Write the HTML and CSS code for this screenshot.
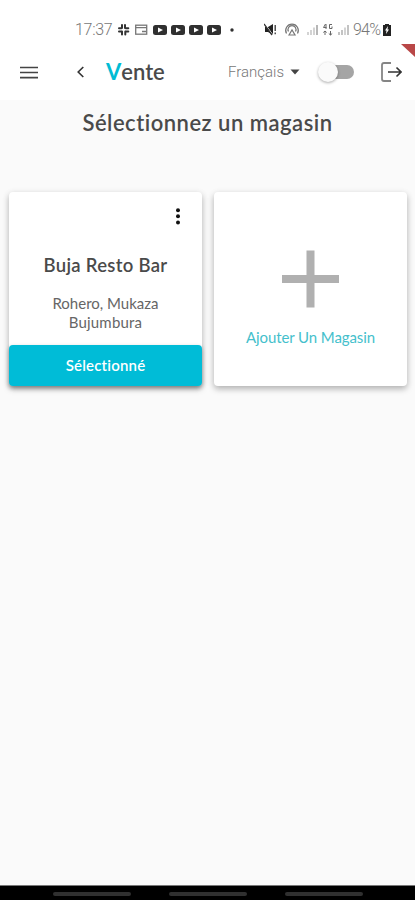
FILE: index.html
```html
<!DOCTYPE html>
<html lang="fr">
<head>
<meta charset="utf-8">
<title>Vente</title>
<link rel="stylesheet" href="styles.css">
</head>
<body>
<div class="status">
  <span class="time">17:37</span>
  <svg class="status-left" width="122" height="14" viewBox="0 0 122 14">
    <g stroke="#333" stroke-width="2" stroke-linecap="round"><path d="M5 2v3M2 5.300h2.500M8 2v3M8.800 5.200h2.500M5 8.600v3M2 8.400h2.500M8.300 8.600v3M8.800 8.400h2.500"/></g>
    <g fill="none" stroke="#777" stroke-width="1.300"><rect x="18.700" y="2.200" width="11" height="9"/><path d="M19 4.700h11M25 8.500h4"/></g>
    <g fill="#303030"><rect x="36" y="2" width="14" height="10" rx="2.500"/><rect x="54" y="2" width="14" height="10" rx="2.500"/><rect x="72" y="2" width="14" height="10" rx="2.500"/><rect x="90" y="2" width="14" height="10" rx="2.500"/><circle cx="115" cy="7" r="1.700"/></g>
    <path fill="#fff" d="M41 4.500l5 2.500-5 2.500zM59 4.500l5 2.500-5 2.500zM77 4.500l5 2.500-5 2.500zM95 4.500l5 2.500-5 2.500z"/>
  </svg>
  <svg class="status-right" width="88" height="14" viewBox="0 0 88 14">
    <path fill="#222" d="M1 4h3l5-3v11L4 9H1z"/><path d="M1 1l8 11" stroke="#fff" stroke-width="1"/><path d="M0 1l8 11M11.200 2v6M11.200 9.500v1.800" stroke="#333" stroke-width="1.300"/>
    <g fill="none" stroke="#777" stroke-width="1.200"><path d="M22.500 10.500a6.300 6.300 0 1 1 11 0M24.500 8.500a4 4 0 1 1 7 0"/><path d="M25 12l3-5 3 5z"/></g>
    <path d="M44 9v3M47 7v5M50 4.500v7.500" stroke="#ccc" stroke-width="1.700"/><path d="M53 2v10" stroke="#999" stroke-width="1.400"/>
    <path d="M61.500 1l-2 3.500h3M62 1v5M68 1.500h-2.500v4H68v-2M61 12V8M59.300 9.500L61 8l1.700 1.500M66.500 8v4M64.800 10.500l1.700 1.500 1.700-1.500" fill="none" stroke="#666" stroke-width="1"/>
    <path d="M75 9v3M78 7v5M84 2v10" stroke="#aaa" stroke-width="1.400"/><path d="M81 4.500v7.500" stroke="#ccc" stroke-width="1.700"/>
  </svg>
  <span class="percent">94%</span>
  <svg class="battery" width="8" height="12" viewBox="0 0 8 12"><path fill="#222" d="M2 0h4v1h2v11H0V1h2z"/><path fill="#fff" d="M5 2L2 6.500h1.500L3 10l3-4.500H4.500z"/></svg>
</div>
<header class="bar">
  <svg class="menu" width="18" height="13" viewBox="0 0 18 13"><path d="M0 1.500h18M0 6.500h18M0 11.700h18" stroke="#444" stroke-width="1.700"/></svg>
  <svg class="back" width="7" height="12" viewBox="0 0 7 12"><path d="M6.300 1L1.200 6l5.100 5" fill="none" stroke="#333" stroke-width="1.600"/></svg>
  <h1 class="brand"><span>V</span>ente</h1>
  <span class="language">Français</span>
  <svg class="caret" width="10" height="6" viewBox="0 0 10 6"><path d="M.5.5h9L5 5.500z" fill="#444"/></svg>
  <span class="switch"><span class="knob"></span></span>
  <svg class="logout" width="21" height="20" viewBox="0 0 21 20"><path d="M10 1H3Q1 1 1 3v14q0 2 2 2h7" fill="none" stroke="#858585" stroke-width="1.800"/><path d="M7 10h13M15.500 5.500L20 10l-4.500 4.500" fill="none" stroke="#333" stroke-width="1.600"/></svg>
  <svg class="corner" width="16" height="16" viewBox="0 0 16 16"><path d="M2 1h14v13z" fill="#b94747"/></svg>
</header>
<main>
  <h2>Sélectionnez un magasin</h2>
  <div class="cards">
    <section class="card">
      <svg class="dots" width="4" height="17" viewBox="0 0 4 17"><g fill="#111"><circle cx="2" cy="2.200" r="2"/><circle cx="2" cy="8.300" r="2"/><circle cx="2" cy="14.400" r="2"/></g></svg>
      <h3>Buja Resto Bar</h3>
      <p>Rohero, Mukaza<br><span class="city">Bujumbura</span></p>
      <button>Sélectionné</button>
    </section>
    <section class="card add">
      <svg width="58" height="58" viewBox="0 0 58 58"><path d="M28.500 .5v57M0 29h57" stroke="#b0b0b0" stroke-width="8"/></svg>
      <a>Ajouter Un Magasin</a>
    </section>
  </div>
</main>
<footer><i></i><i></i><i></i></footer>
</body>
</html>
```
FILE: styles.css
```css
* { box-sizing: border-box; }
body {
  margin: 0;
  height: 900px;
  display: flex;
  flex-direction: column;
  overflow: hidden;
  background: #fafafa;
  color: #4a4a4a;
  font-family: Lato, "Liberation Sans", sans-serif;
  font-variant-ligatures: none;
}
svg { display: block; flex: none; }
h1, h2, h3, p { margin: 0; }
h1, h2, h3 { font-weight: 600; }
.status {
  height: 44px;
  padding: 15px 0 0 75px;
  display: flex;
  align-items: center;
  background: #fff;
  color: #777;
  font: 300 16px/28px Roboto, sans-serif;
}
.time { width: 42px; flex: none; letter-spacing: -.3px; }
.status-right { margin-left: 25px; }
.percent { width: 28px; margin-left: 1px; letter-spacing: -.8px; }
.battery { margin-left: 2px; }
.bar {
  height: 56px;
  padding-left: 20px;
  display: flex;
  align-items: center;
  position: relative;
  background: #fff;
}
.back { margin-left: 39px; }
.brand {
  width: 60px;
  margin-left: 22px;
  font-size: 22px;
  line-height: 28px;
}
.brand span { color: #00bcd4; font-weight: 700; }
.language {
  width: 57px;
  margin-left: 62px;
  color: #777;
  font: 300 15px/20px Roboto, sans-serif;
}
.caret { margin-left: 5px; }
.switch {
  width: 30px;
  height: 14px;
  margin-left: 24px;
  border-radius: 7px;
  background: #a5a5a5;
  position: relative;
}
.knob {
  position: absolute;
  left: -6px;
  top: -3px;
  width: 20px;
  height: 20px;
  border-radius: 50%;
  background: #fafafa;
  box-shadow: 0 1px 3px #0005;
}
.logout { margin-left: 27px; }
.corner { position: absolute; right: 0; top: -1px; }
main { flex: 1; }
h2 {
  height: 92px;
  padding-top: 8px;
  text-align: center;
  font-size: 22px;
  line-height: 29px;
  letter-spacing: .5px;
}
.cards { display: grid; grid-template-columns: 193px 193px; gap: 12px; padding-left: 9px; }
.card {
  height: 194px;
  border-radius: 4px;
  background: #fff;
  display: flex;
  flex-direction: column;
  align-items: center;
  box-shadow: 0 3px 6px #0004, 0 1px 9px #0000000d;
}
.dots { align-self: flex-end; margin: 16px 22px 0 0; }
h3 { margin-top: 27px; font-size: 18.500px; line-height: 26px; letter-spacing: .3px; }
p {
  margin-top: 16px;
  text-align: center;
  font-size: 15px;
  line-height: 19px;
  font-weight: 400;
  color: #666;
}
.city { letter-spacing: .2px; }
button {
  width: 100%;
  height: 41px;
  padding: 0 0 2px;
  margin-top: auto;
  border: 0;
  border-radius: 4px;
  background: #00bcd7;
  color: #fff;
  font: 600 15px Lato, sans-serif;
  font-variant-ligatures: none;
  letter-spacing: .2px;
  box-shadow: 0 2px 4px #0005;
}
.add { padding-top: 58px; }
.add a { margin-top: 19px; font-size: 15px; line-height: 20px; letter-spacing: -.1px; color: #45bfcc; }
footer {
  height: 15px;
  padding-top: 6px;
  border-top: 1px solid #777;
  background: #000;
  display: flex;
  justify-content: center;
  gap: 38px;
}
footer i { width: 78px; height: 4px; border-radius: 2px; background: #303030; }
```
